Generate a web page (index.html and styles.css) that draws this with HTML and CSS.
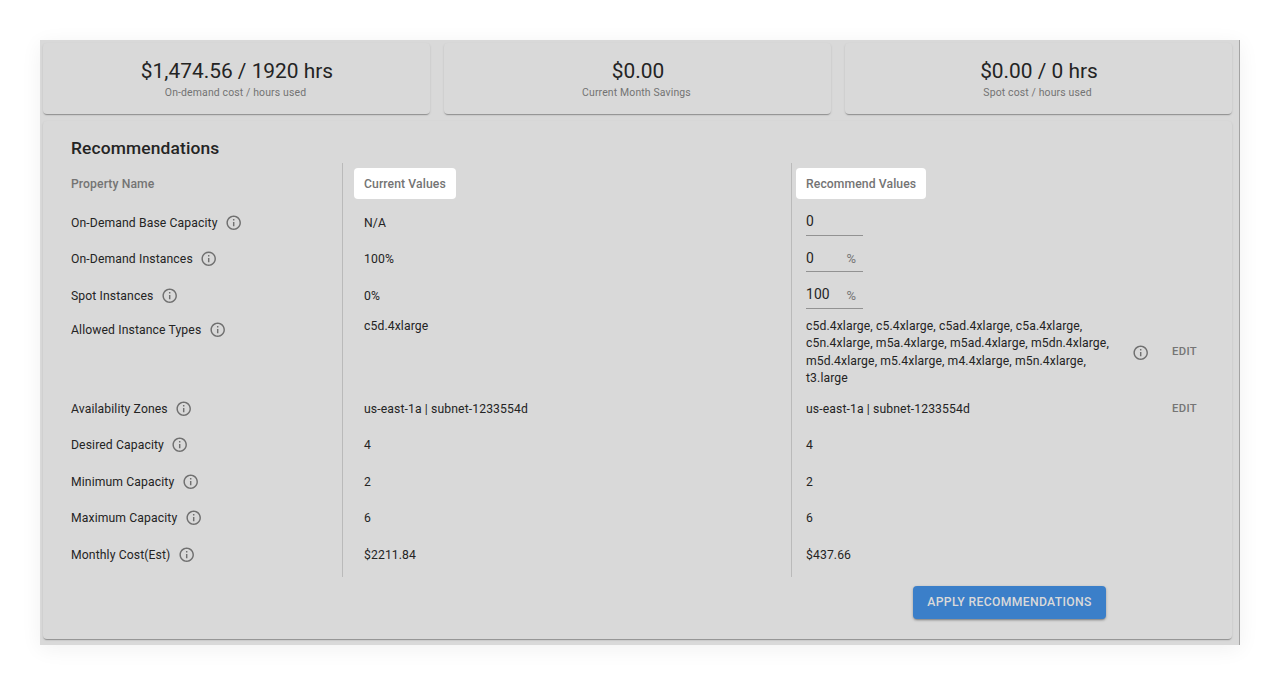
FILE: index.html
```
<!DOCTYPE html>
<html lang="en">
<head>
<meta charset="utf-8">
<title>Recommendations</title>
<link rel="stylesheet" href="styles.css">
</head>
<body>
<svg class="defs" width="0" height="0" aria-hidden="true">
  <symbol id="info" viewBox="0 0 24 24"><path d="M11 7h2v2h-2zm0 4h2v6h-2zm1-9C6.480 2 2 6.480 2 12s4.480 10 10 10 10-4.480 10-10S17.520 2 12 2zm0 18c-4.410 0-8-3.590-8-8s3.590-8 8-8 8 3.590 8 8-3.590 8-8 8z"/></symbol>
</svg>
<main class="frame">
  <section class="stats">
    <div class="card stat"><div class="stat-value">$1,474.56 / 1920 hrs</div><div class="stat-label">On-demand cost / hours used</div></div>
    <div class="card stat"><div class="stat-value">$0.00</div><div class="stat-label">Current Month Savings</div></div>
    <div class="card stat"><div class="stat-value">$0.00 / 0 hrs</div><div class="stat-label">Spot cost / hours used</div></div>
  </section>
  <section class="card panel">
    <h2 class="title">Recommendations</h2>
    <div class="columns">
      <div class="col names">
        <div class="head"><span>Property Name</span></div>
        <div class="row">On-Demand Base Capacity<svg class="icon"><use href="#info"/></svg></div>
        <div class="row">On-Demand Instances<svg class="icon"><use href="#info"/></svg></div>
        <div class="row">Spot Instances<svg class="icon"><use href="#info"/></svg></div>
        <div class="row tall"><div class="tall-name">Allowed Instance Types<svg class="icon"><use href="#info"/></svg></div></div>
        <div class="row">Availability Zones<svg class="icon"><use href="#info"/></svg></div>
        <div class="row">Desired Capacity<svg class="icon"><use href="#info"/></svg></div>
        <div class="row">Minimum Capacity<svg class="icon"><use href="#info"/></svg></div>
        <div class="row">Maximum Capacity<svg class="icon"><use href="#info"/></svg></div>
        <div class="row">Monthly Cost(Est)<svg class="icon"><use href="#info"/></svg></div>
      </div>
      <div class="col current">
        <div class="head"><span class="pill">Current Values</span></div>
        <div class="row">N/A</div>
        <div class="row">100%</div>
        <div class="row">0%</div>
        <div class="row tall">c5d.4xlarge</div>
        <div class="row">us-east-1a | subnet-1233554d</div>
        <div class="row">4</div>
        <div class="row">2</div>
        <div class="row">6</div>
        <div class="row">$2211.84</div>
      </div>
      <div class="col recommend">
        <div class="head"><span class="pill">Recommend Values</span></div>
        <div class="row"><div class="field"><span>0</span></div></div>
        <div class="row"><div class="field"><span>0</span><span class="unit">%</span></div></div>
        <div class="row"><div class="field"><span>100</span><span class="unit">%</span></div></div>
        <div class="row tall">
          <div class="types">c5d.4xlarge, c5.4xlarge, c5ad.4xlarge, c5a.4xlarge,<br>c5n.4xlarge, m5a.4xlarge, m5ad.4xlarge, m5dn.4xlarge,<br>m5d.4xlarge, m5.4xlarge, m4.4xlarge, m5n.4xlarge,<br>t3.large</div>
          <div class="actions"><svg class="icon"><use href="#info"/></svg><span class="edit">EDIT</span></div>
        </div>
        <div class="row">us-east-1a | subnet-1233554d<span class="edit">EDIT</span></div>
        <div class="row">4</div>
        <div class="row">2</div>
        <div class="row">6</div>
        <div class="row">$437.66</div>
      </div>
    </div>
    <div class="footer"><button class="apply">APPLY RECOMMENDATIONS</button></div>
  </section>
</main>
</body>
</html>
```
FILE: styles.css
```
* { box-sizing: border-box; }
body {
  margin: 0;
  padding: 40px;
  background: #fff;
  font-family: Roboto, sans-serif;
  font-size: 12.2px;
  line-height: 17.4px;
  letter-spacing: 0.11px;
  color: #242424;
}
.defs { display: block; }
.frame {
  width: 1200px;
  height: 605px;
  padding: 3px 7px 0 3px;
  background: #d9d9d9;
  border-right: 1px solid #a3a3a3;
  box-shadow: 0 4px 20px rgba(0, 0, 0, 0.06);
}
.card {
  background: #d9d9d9;
  border-radius: 4px;
  box-shadow: 0 2px 1px -1px rgba(0, 0, 0, 0.2), 0 1px 1px rgba(0, 0, 0, 0.12), 0 1px 3px rgba(0, 0, 0, 0.08);
}
.stats { display: grid; grid-template-columns: repeat(3, 1fr); gap: 14px; }
.stat { height: 71px; padding: 16px 0 0 1px; text-align: center; }
.stat-value { font-size: 20.9px; line-height: 25px; letter-spacing: 0; }
.stat-label { padding-right: 3px; font-size: 10.45px; line-height: 17px; letter-spacing: 0.14px; color: #737373; }
.panel { height: 518px; margin-top: 7px; padding: 16px 28px 0; }
.title { margin: 0; font-size: 17.4px; line-height: 22px; font-weight: 500; letter-spacing: 0.13px; }
.columns { display: grid; grid-template-columns: 271px 449px 1fr; margin-top: 4px; height: 414px; }
.current, .recommend { border-left: 1px solid #bababa; }
.current { padding-left: 11px; }
.recommend { padding-left: 4px; }
.current .row { padding-left: 10px; }
.recommend .row { padding-left: 10px; }
.head { display: flex; align-items: center; height: 41.25px; font-weight: 500; letter-spacing: 0.09px; color: #747474; }
.head span { padding-top: 2px; }
.head .pill { padding: 7.6px 10px 6px; border-radius: 4px; background: #fff; }
.row { display: flex; align-items: center; height: 36.5px; padding-top: 1.5px; }
.row.tall { align-items: flex-start; height: 76.5px; padding-top: 4.3px; }
.tall-name { display: flex; align-items: center; padding-top: 3.2px; }
.icon { flex: none; width: 17.4px; height: 17.4px; margin: 0 0 1.5px 7.3px; fill: #707070; }
.actions .icon { margin-left: 6.2px; margin-bottom: 0; }
.field {
  display: flex;
  align-items: center;
  width: 57px;
  height: 28px;
  margin-bottom: 3px;
  padding-top: 1px;
  border-bottom: 1px solid #929292;
  font-size: 13.9px;
}
.unit { margin-left: auto; margin-right: 7px; padding-top: 1px; font-size: 13px; letter-spacing: 0; color: #757575; }
.types { width: 320px; }
.actions { display: flex; align-items: center; height: 69.6px; flex: 1; }
.edit { margin-left: auto; margin-right: 7px; padding-bottom: 1.5px; font-size: 11.3px; font-weight: 500; letter-spacing: 0.3px; color: #757575; }
.footer { display: flex; padding: 9px 0 0 842px; }
.apply {
  flex: none;
  width: 193px;
  height: 33px;
  padding: 0;
  border: 0;
  border-radius: 4px;
  background: #3b7fc9;
  color: #d9d9d9;
  font: 500 12.2px/19px Roboto, sans-serif;
  letter-spacing: 0.33px;
  white-space: nowrap;
  box-shadow: 0 2px 2px -1px rgba(0, 0, 0, 0.25), 0 1px 3px rgba(0, 0, 0, 0.25);
}
```
